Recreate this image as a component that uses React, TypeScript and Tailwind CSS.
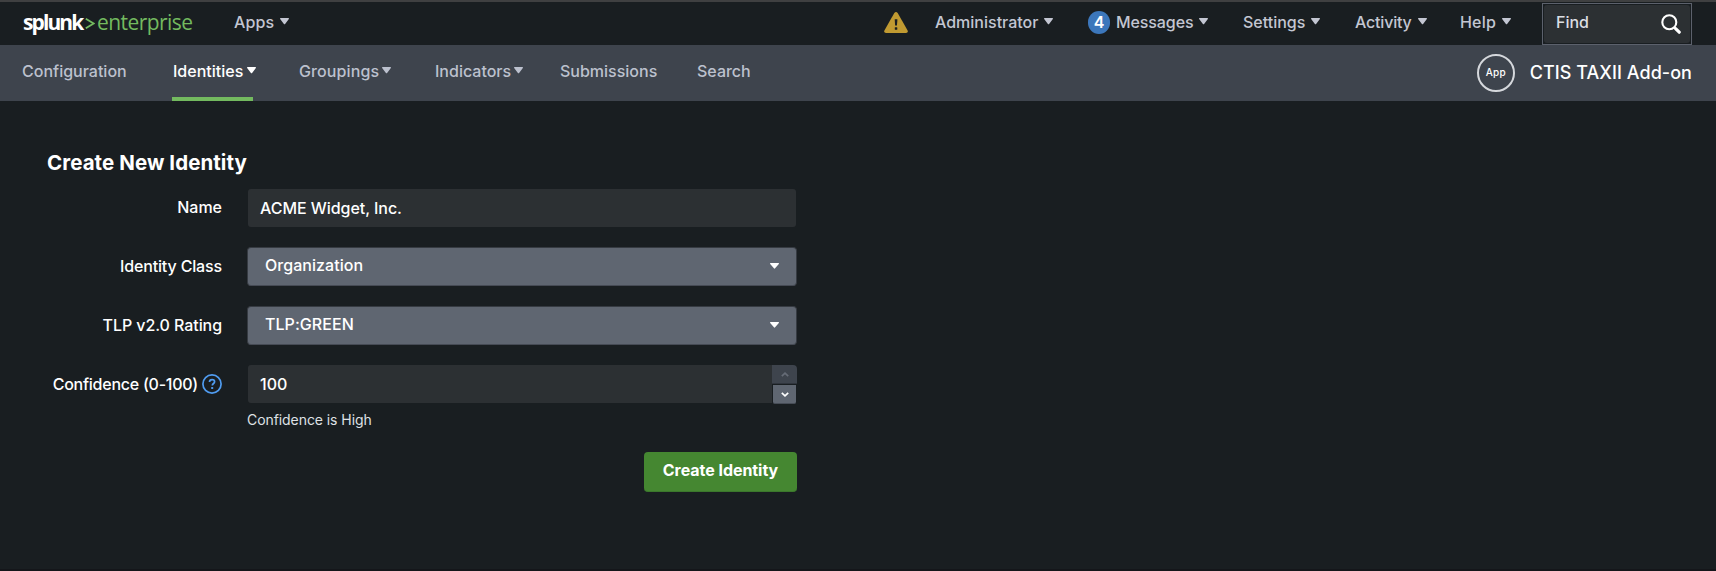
import type { ReactNode } from "react";

function Caret({ className = "" }: { className?: string }) {
  return (
    <svg viewBox="0 0 9 7" className={"h-[7px] w-[9px] shrink-0 " + className} fill="currentColor">
      <path d="M.6 0h7.8c.5 0 .75.55.45.95L5.1 5.9a.75.75 0 0 1-1.2 0L.15.95C-.15.55.1 0 .6 0Z" />
    </svg>
  );
}

function MenuItem({ children, slot, caret = true, gap = "ml-[5px]" }: { children: ReactNode; slot: string; caret?: boolean; gap?: string }) {
  return (
    <a className={"flex h-full shrink-0 items-center whitespace-nowrap " + slot}>
      <span>{children}</span>
      {caret && <Caret className={gap + " -mt-px"} />}
    </a>
  );
}

function TopBar() {
  return (
    <header className="flex h-[43px] items-center bg-[#191e21] pr-6 pb-[3px] font-medium text-[#c3c6d2]">
      <a className="ml-[23px] flex w-[211px] shrink-0 items-center whitespace-nowrap font-['Open_Sans',sans-serif] text-[21px] leading-none">
        <span className="w-[62px] font-bold tracking-[-1.9px] text-white">splunk</span>
        <svg viewBox="0 0 10 13" className="mt-[3px] h-[13px] w-[10px]" fill="none" stroke="#73ba5f" strokeWidth="1.8">
          <path d="M.8 1.8 8.6 6.5.8 11.2" />
        </svg>
        <span className="ml-[2px] font-normal tracking-[-0.55px] text-[#73ba5f]">enterprise</span>
      </a>
      <MenuItem slot="mr-auto tracking-[0.1px]" gap="ml-[6px]">Apps</MenuItem>
      <svg viewBox="0 0 24 21" className="mt-px mr-[27px] h-[21px] w-6 shrink-0">
        <path d="M10.3 1.1Q12-1 13.7 1.1L23.6 18.4Q24.4 21 22 21H2Q-.4 21 .4 18.4Z" fill="#c09a31" />
        <path d="M10.7 7.2h2.7l-.4 6.4h-1.9z" fill="#191e21" />
        <rect x="10.8" y="15.2" width="2.5" height="2.6" rx=".6" fill="#191e21" />
      </svg>
      <MenuItem slot="w-[153px]" gap="ml-[6px]">Administrator</MenuItem>
      <span className="mr-[6px] flex h-[23px] w-[22px] shrink-0 items-center justify-center rounded-full bg-[#3c77bb] font-semibold text-white">4</span>
      <MenuItem slot="w-[127px] tracking-[-0.1px]" gap="ml-[6px]">Messages</MenuItem>
      <MenuItem slot="w-[112px]" gap="ml-[6px]">Settings</MenuItem>
      <MenuItem slot="w-[105px] tracking-[-0.2px]" gap="ml-[6px]">Activity</MenuItem>
      <MenuItem slot="w-[82px] tracking-[0.2px]" gap="ml-[6px]">Help</MenuItem>
      <div className="mt-[3px] flex h-[42px] w-[150px] shrink-0 items-center justify-between border border-[#5c616c] p-px text-[#dcdee3]">
        <div className="flex h-full w-full items-center justify-between rounded-[3px] bg-[#2c3033] pr-[9px] pl-[12px]">
          <span className="-mt-[3px]">Find</span>
          <svg viewBox="0 0 20 20" className="h-5 w-5" fill="none" stroke="white">
            <circle cx="8.3" cy="8.3" r="7" strokeWidth="2.1" />
            <path d="m13.2 13.2 1.2 1.2" strokeWidth="2.2" />
            <path d="m14.6 14.6 3.6 3.6" strokeWidth="3.2" strokeLinecap="round" />
          </svg>
        </div>
      </div>
    </header>
  );
}

function AppNav() {
  return (
    <nav className="flex h-14 items-center bg-[#3e444d] pr-6 pl-[22px] font-medium text-[#bcc1ce]">
      <div className="flex h-full items-center pb-1">
        <MenuItem slot="w-[150px]" caret={false}>Configuration</MenuItem>
      </div>
      <div className="flex h-full w-[81px] items-center border-b-4 border-[#73ba5f] text-white">
        <MenuItem slot="ml-px" gap="ml-[4px]">Identities</MenuItem>
      </div>
      <div className="ml-[46px] flex h-full items-center pb-1">
        <MenuItem slot="w-[136px] tracking-[0.1px]" gap="ml-[3px]">Groupings</MenuItem>
        <MenuItem slot="w-[125px]" gap="ml-[3px]">Indicators</MenuItem>
        <MenuItem slot="w-[137px]" caret={false}>Submissions</MenuItem>
        <MenuItem slot="" caret={false}>Search</MenuItem>
      </div>
      <div className="-mt-px ml-auto flex items-center whitespace-nowrap text-white">
        <span className="mr-[15px] flex h-[38px] w-[38px] items-center justify-center rounded-full border-2 border-[#d5d8dc] pb-[2px] text-[10px] tracking-[0.2px]">App</span>
        <span className="mt-px text-[18px] tracking-[0.05px]">CTIS TAXII Add-on</span>
      </div>
    </nav>
  );
}

function Row({ label, className = "", children }: { label: ReactNode; className?: string; children: ReactNode }) {
  return (
    <div className={"flex h-[39px] w-[797px] items-center " + className}>
      <label className="flex w-[222px] items-center justify-end whitespace-nowrap pb-[2px] font-medium">{label}</label>
      <div className="ml-[25px] h-full w-[550px]">{children}</div>
    </div>
  );
}

function Select({ value }: { value: string }) {
  return (
    <div className="flex h-full items-center justify-between rounded-[4px] border border-[#363b42] border-b-[#464b55] bg-[#5f6671] pr-[17px] pl-[17px] font-medium">
      <span className="-mt-[3px] tracking-[0.05px]">{value}</span>
      <svg viewBox="0 0 9 6" className="-mt-px h-[6px] w-[9px]" fill="white">
        <path d="M.5 0h8c.5 0 .6.5.3.9L5.1 5.3a.8.8 0 0 1-1.2 0L.2.9C-.1.5 0 0 .5 0Z" />
      </svg>
    </div>
  );
}

function Chevron({ up = false, color }: { up?: boolean; color: string }) {
  return (
    <svg viewBox="0 0 8 5" className="h-[5px] w-2" fill="none" stroke={color} strokeWidth="1.7">
      <path d={up ? "M.8 4.2 4 1.2l3.2 3" : "M.8.8 4 3.8 7.2.8"} />
    </svg>
  );
}

export default function App() {
  return (
    <div className="flex h-[571px] w-[1716px] flex-col overflow-hidden border-t-2 border-b-2 border-t-[#3f4041] border-b-[#14161a] bg-[#191e21] font-['Inter',sans-serif] text-[16px] leading-6 text-white">
      <TopBar />
      <AppNav />
      <main className="flex flex-col">
        <h1 className="mt-12 ml-[47px] h-[29px] text-[20.5px] leading-7 font-bold tracking-[0.07px] whitespace-nowrap">Create New Identity</h1>
        <Row label="Name" className="mt-[10px]">
          <div className="mt-[1px] ml-px flex h-[38px] w-[548px] items-center rounded-[3px] bg-[#2c3033] px-[12px] pb-px font-medium tracking-[-0.05px]">ACME Widget, Inc.</div>
        </Row>
        <Row label={<span className="tracking-[-0.15px]">Identity Class</span>} className="mt-5">
          <Select value="Organization" />
        </Row>
        <Row label={<span className="tracking-[-0.07px]">TLP v2.0 Rating</span>} className="mt-5">
          <Select value="TLP:GREEN" />
        </Row>
        <Row
          className="mt-5"
          label={
            <>
              <span className="tracking-[-0.25px]">Confidence (0-100)</span>
              <svg viewBox="0 0 20 20" className="mt-px ml-[4px] h-5 w-5" fill="none" stroke="#509cf0" strokeWidth="1.7">
                <circle cx="10" cy="10" r="9.1" />
                <path d="M7.5 8c0-1.5 1.1-2.4 2.6-2.4s2.5.8 2.5 2.1c0 1.7-2.3 1.9-2.3 3.8" />
                <path d="M9.2 14h2" strokeWidth="1.9" />
              </svg>
            </>
          }
        >
          <div className="flex h-full">
            <div className="ml-px flex h-[38px] w-[524px] items-center rounded-l-[3px] bg-[#2c3033] px-[12px] pb-px font-medium">100</div>
            <div className="flex h-[39px] w-[25px] flex-col">
              <div className="flex h-[19px] items-center justify-center rounded-tr-[4px] border-b border-[#30353d] bg-[#3e444d]">
                <Chevron up color="#666c77" />
              </div>
              <div className="mt-px mr-px ml-px flex h-[19px] items-center justify-center rounded-b-[2px] border-b border-[#474d57] bg-[#5f6671]">
                <Chevron color="#ffffff" />
              </div>
            </div>
          </div>
        </Row>
        <p className="mt-[4px] ml-[247px] text-[14px] leading-6 tracking-[-0.07px] text-[#dfe1e5]">Confidence is High</p>
        <button className="mt-5 ml-[644px] flex h-10 w-[153px] items-center justify-center rounded-[4px] border-b border-[#3b782c] bg-[#458731] pb-[3px] font-bold tracking-[-0.05px]">
          Create Identity
        </button>
      </main>
    </div>
  );
}
